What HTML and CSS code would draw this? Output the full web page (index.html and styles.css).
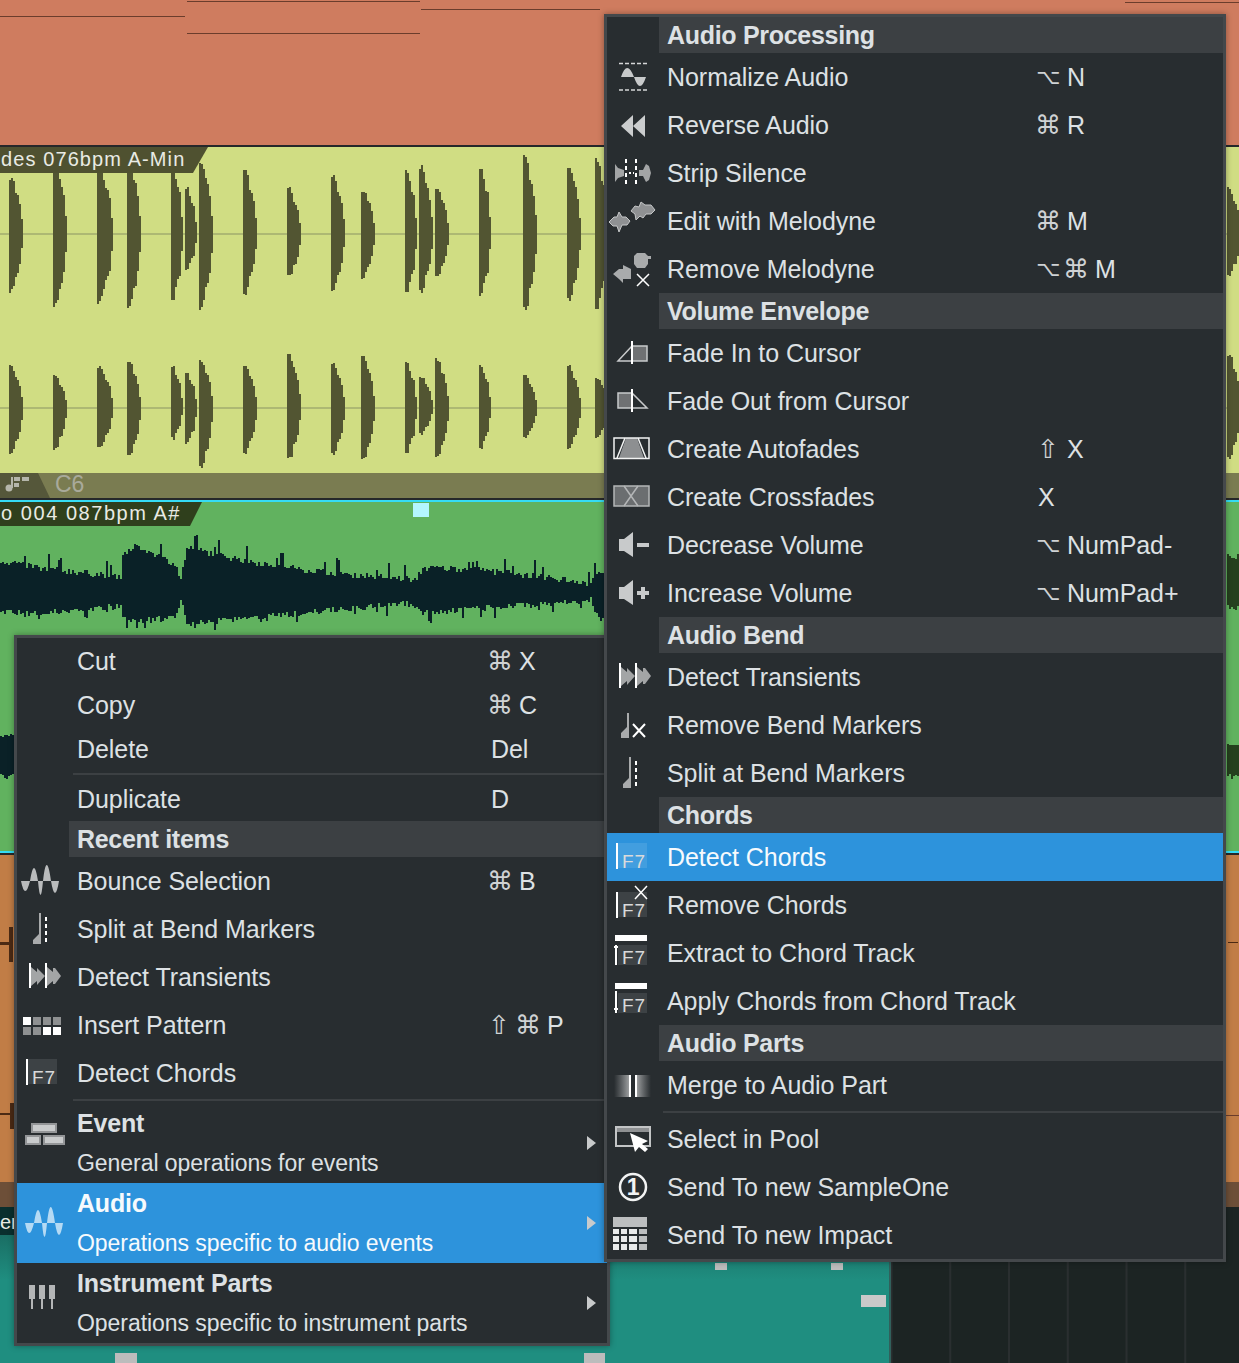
FILE: index.html
```html
<!DOCTYPE html>
<html lang="en">
<head>
    <meta charset="UTF-8">
    <title>Audio context menu</title>
    <link rel="stylesheet" href="styles.css">
</head>
<body>

<!-- shared icons -->
<svg class="defs" aria-hidden="true">
    <symbol id="i-wave" viewBox="0 0 38 48" width="38" height="48">
        <path d="M0 24Q4 44 9 24Q13 -2 17 24Q19.5 52 22 24Q25.5 -8 30 24Q34 48 38 24Z"/>
    </symbol>
    <symbol id="i-transients" viewBox="0 0 60 48" width="60" height="48">
        <path fill="#a3a5a6" d="M14 14L20 19V15L28 23L20 32V28L14 33ZM30 14L36 19V15L38 15L44 23L38 31H36V28L30 33Z"/>
        <path fill="#fff" d="M12 10h2v25h-2zM28 10h2v25h-2z"/>
    </symbol>
    <symbol id="i-split" viewBox="0 0 60 48" width="60" height="48">
        <path fill="#a9abac" d="M22 8h2v31h-8v-4l6-6z"/>
        <path stroke="#fff" stroke-width="2" stroke-dasharray="4 3" d="M29 12V38"/>
    </symbol>
    <symbol id="i-f7" viewBox="0 0 60 48" width="60" height="48">
        <path fill="#fff" fill-opacity=".1" d="M11 10h29v25H11z"/>
        <path fill="#fff" d="M9 10h2v26H9z"/>
    </symbol>
    <symbol id="i-f7-track" viewBox="0 0 60 48" width="60" height="48">
        <path fill="#fff" d="M8 6h32v6H8z"/>
        <path fill="#fff" fill-opacity=".1" d="M11 16h29v20H11z"/>
    </symbol>
</svg>

<div class="stage">

    <div class="tracks">
        <div class="track track-top">
            <svg width="1239" height="145"><path class="clip-lines" d="M0 16.5H185M187 1.5H420M187 33.5H420M421 9.5H600M1125 2.5H1239"/></svg>
        </div>

        <div class="track track-yellow">
            <svg width="1239" height="326">
                <path class="mid-yellow" d="M0 87H1239M0 261H1239"/>
                <path id="wave-yellow" class="wave-yellow"/>
            </svg>
            <div class="clip-name clip-name-yellow">des 076bpm A-Min</div>
        </div>

        <div class="track track-chord">
            <div class="chord-tag">
                <svg width="26" height="16"><circle cx="5" cy="12" r="3.5"/><path d="M7 1h2v11H7zM10 1h6v4h-6zM18 1h7v4h-7zM10 7h5v4h-5z"/></svg>
            </div>
            <span class="chord-name">C6</span>
        </div>

        <div class="track track-green">
            <svg width="1239" height="349"><path id="wave-green" class="wave-green"/><path id="wave-green-side" class="wave-green-side"/></svg>
            <div class="clip-name clip-name-green">o 004 087bpm A#</div>
            <div class="clip-handle"></div>
        </div>

        <div class="track track-orange">
            <svg width="1239" height="327"><path class="marks" d="M9 72h4v35H9zM0 87h9v3H0zM10 248h4v26h-4zM0 258h10v2H0zM1228 87h10v1h-10z"/><path class="clip-lines" d="M1226 260.5H1239"/></svg>
        </div>
        <div class="track track-brown"></div>

        <div class="track-bottom">
            <div class="teal-col">
                <div class="teal-name">er</div>
                <div class="teal-clip">
                    <span class="tick tick-a"></span>
                    <span class="tick tick-b"></span>
                    <span class="tick tick-c"></span>
                    <span class="tick tick-d"></span>
                    <span class="tick tick-e"></span>
                </div>
            </div>
            <div class="dark-grid"></div>
        </div>
    </div>

    <!-- context menu -->
    <div class="menu menu-left">
        <div class="row row-low"><span class="icon"></span><span class="label">Cut</span><span class="keys"><span class="sym cmd">⌘</span>X</span></div>
        <div class="row row-low"><span class="icon"></span><span class="label">Copy</span><span class="keys"><span class="sym cmd">⌘</span>C</span></div>
        <div class="row row-low"><span class="icon"></span><span class="label">Delete</span><span class="keys keys-plain">Del</span></div>
        <div class="sep"></div>
        <div class="row row-low"><span class="icon"></span><span class="label">Duplicate</span><span class="keys keys-plain">D</span></div>
        <div class="head">Recent items</div>
        <div class="row">
            <svg class="icon" viewBox="0 0 60 48"><use href="#i-wave" x="4" fill="#b9bbbc"/></svg>
            <span class="label">Bounce Selection</span><span class="keys"><span class="sym cmd">⌘</span>B</span>
        </div>
        <div class="row">
            <svg class="icon" viewBox="0 0 60 48"><use href="#i-split"/></svg>
            <span class="label">Split at Bend Markers</span>
        </div>
        <div class="row">
            <svg class="icon" viewBox="0 0 60 48"><use href="#i-transients"/></svg>
            <span class="label">Detect Transients</span>
        </div>
        <div class="row">
            <svg class="icon" viewBox="0 0 60 48">
                <path fill="#fff" d="M6 16h8v8H6zM36 26h8v8h-8zM26 26h8v8h-8z"/>
                <path fill="#8e9091" d="M16 16h8v8h-8zM26 16h8v8h-8zM36 16h8v8h-8zM6 26h8v8H6zM16 26h8v8h-8z"/>
            </svg>
            <span class="label">Insert Pattern</span><span class="keys"><span class="sym shift sym-tight">⇧</span><span class="sym cmd">⌘</span>P</span>
        </div>
        <div class="row">
            <svg class="icon" viewBox="0 0 60 48"><use href="#i-f7"/><text class="f7" x="15" y="35">F7</text></svg>
            <span class="label">Detect Chords</span>
        </div>
        <div class="sep"></div>
        <div class="row row-tall">
            <svg class="icon" viewBox="0 0 60 48">
                <path fill="#c9cbcc" stroke="#939597" stroke-width="2" d="M15 5h24v8H15zM9 17h14v8H9zM27 17h20v8H27z"/>
            </svg>
            <span class="label label-two"><b>Event</b><span>General operations for events</span></span>
            <span class="arrow"></span>
        </div>
        <div class="row row-tall active">
            <svg class="icon" viewBox="0 0 60 48"><use href="#i-wave" x="8" fill="#b5daf4"/></svg>
            <span class="label label-two"><b>Audio</b><span>Operations specific to audio events</span></span>
            <span class="arrow"></span>
        </div>
        <div class="row row-tall">
            <svg class="icon" viewBox="0 0 60 48">
                <path fill="#b4b6b7" d="M12 6h6v14h-2v10h-2V20h-2zM22 6h6v14h-2v10h-2V20h-2zM32 6h6v14h-2v10h-2V20h-2z"/>
            </svg>
            <span class="label label-two"><b>Instrument Parts</b><span>Operations specific to instrument parts</span></span>
            <span class="arrow"></span>
        </div>
    </div>

    <!-- submenu -->
    <div class="menu menu-right">
        <div class="head">Audio Processing</div>
        <div class="row">
            <svg class="icon" viewBox="0 0 60 48">
                <path stroke="#d5d7d8" stroke-width="1.5" stroke-dasharray="4 2" d="M12 10.5H40M12 37H40"/>
                <path fill="#c8cacb" d="M14 24Q20 6 27 24ZM27 24H39Q33 42 27 24Z"/>
            </svg>
            <span class="label">Normalize Audio</span><span class="keys"><span class="sym opt">⌥</span>N</span>
        </div>
        <div class="row">
            <svg class="icon" viewBox="0 0 60 48"><path fill="#cbcdce" d="M14 25L26 14V36ZM26 25L38 14V36Z"/></svg>
            <span class="label">Reverse Audio</span><span class="keys"><span class="sym cmd">⌘</span>R</span>
        </div>
        <div class="row">
            <svg class="icon" viewBox="0 0 60 48">
                <path fill="#a3a5a6" d="M8 15L11 19L17 21V27L11 29L8 33ZM32 21H36L39 15L42 17L44 24L42 31L39 33L36 27H32Z"/>
                <path stroke="#fff" stroke-width="2" stroke-dasharray="4 3" d="M19 10V38M29 10V38"/>
                <path stroke="#fff" stroke-width="2" d="M22 24h2M26 24h1"/>
            </svg>
            <span class="label">Strip Silence</span>
        </div>
        <div class="row">
            <svg class="icon" viewBox="0 0 60 48">
                <path fill="#8f9193" stroke="#c5c7c8" d="M2 25L7 20L10 20L12 15L15 20L19 20L23 24L20 28L15 28L12 35L10 29L6 29Z"/>
                <path fill="#8f9193" stroke="#c5c7c8" d="M24 14L28 9L32 10L34 5L38 8L44 8L48 13L44 17L39 17L36 21L33 19L29 23L28 17Z"/>
            </svg>
            <span class="label">Edit with Melodyne</span><span class="keys"><span class="sym cmd">⌘</span>M</span>
        </div>
        <div class="row">
            <svg class="icon" viewBox="0 0 60 48">
                <path fill="#a9abac" d="M27 11L30 8H38L41 11H44V14H41V19L38 23H30L27 19ZM6 29L12 24H16V20L24 24V34L16 34V38L12 34Z"/>
                <path stroke="#fff" stroke-width="1.5" fill="none" d="M30 29L42 41M42 29L30 41"/>
            </svg>
            <span class="label">Remove Melodyne</span><span class="keys"><span class="sym opt sym-tight">⌥</span><span class="sym cmd">⌘</span>M</span>
        </div>
        <div class="head">Volume Envelope</div>
        <div class="row">
            <svg class="icon" viewBox="0 0 60 48">
                <path fill="#6f7173" stroke="#c8cacb" stroke-width="1.5" d="M25 17H40V32H25Z"/>
                <path fill="none" stroke="#c8cacb" stroke-width="1.5" d="M25 17L11 32H25"/>
                <path stroke="#fff" stroke-width="2" d="M25 12V35"/>
            </svg>
            <span class="label">Fade In to Cursor</span>
        </div>
        <div class="row">
            <svg class="icon" viewBox="0 0 60 48">
                <path fill="#6f7173" stroke="#c8cacb" stroke-width="1.5" d="M11 16H25V31H11Z"/>
                <path fill="none" stroke="#c8cacb" stroke-width="1.5" d="M25 16L40 31H25"/>
                <path stroke="#fff" stroke-width="2" d="M25 12V35"/>
            </svg>
            <span class="label">Fade Out from Cursor</span>
        </div>
        <div class="row">
            <svg class="icon" viewBox="0 0 60 48">
                <path fill="#8d8f91" d="M12 33L19 13H30L37 33Z"/>
                <path fill="none" stroke="#f2f3f3" stroke-width="1.5" d="M7 13H42V33.5H7ZM10 33L18 13M31 13L39 33"/>
            </svg>
            <span class="label">Create Autofades</span><span class="keys"><span class="sym shift shift-solo">⇧</span>X</span>
        </div>
        <div class="row">
            <svg class="icon" viewBox="0 0 60 48">
                <path fill="#6b6e70" stroke="#b4b6b7" stroke-width="1.5" d="M7 13H42V33H7Z"/>
                <path fill="none" stroke="#b4b6b7" stroke-width="1.5" d="M17 13L31 33M31 13L17 33"/>
            </svg>
            <span class="label">Create Crossfades</span><span class="keys"><span class="key-x">X</span></span>
        </div>
        <div class="row">
            <svg class="icon" viewBox="0 0 60 48">
                <path fill="#c8cacb" d="M12 18H17L26 11V36L17 30H12ZM30 22H42V26H30Z"/>
            </svg>
            <span class="label">Decrease Volume</span><span class="keys"><span class="sym opt">⌥</span>NumPad-</span>
        </div>
        <div class="row">
            <svg class="icon" viewBox="0 0 60 48">
                <path fill="#c8cacb" d="M12 18H17L26 11V36L17 30H12ZM30 22H34V18H38V22H42V26H38V30H34V26H30Z"/>
            </svg>
            <span class="label">Increase Volume</span><span class="keys"><span class="sym opt">⌥</span>NumPad+</span>
        </div>
        <div class="head">Audio Bend</div>
        <div class="row">
            <svg class="icon" viewBox="0 0 60 48"><use href="#i-transients"/></svg>
            <span class="label">Detect Transients</span>
        </div>
        <div class="row">
            <svg class="icon" viewBox="0 0 60 48">
                <path fill="#a9abac" d="M20 12h2v25h-8v-5l6-6z"/>
                <path stroke="#fff" stroke-width="2" fill="none" d="M26 23L38 36M38 23L26 36"/>
            </svg>
            <span class="label">Remove Bend Markers</span>
        </div>
        <div class="row">
            <svg class="icon" viewBox="0 0 60 48"><use href="#i-split"/></svg>
            <span class="label">Split at Bend Markers</span>
        </div>
        <div class="head">Chords</div>
        <div class="row active">
            <svg class="icon" viewBox="0 0 60 48"><use href="#i-f7"/><text class="f7" x="15" y="35">F7</text></svg>
            <span class="label">Detect Chords</span>
        </div>
        <div class="row">
            <svg class="icon" viewBox="0 0 60 48">
                <use href="#i-f7" y="1"/>
                <text class="f7" x="15" y="36">F7</text>
                <path stroke="#fff" stroke-width="1.5" fill="none" d="M28 5L40 18M40 5L28 18" />
            </svg>
            <span class="label">Remove Chords</span>
        </div>
        <div class="row">
            <svg class="icon" viewBox="0 0 60 48">
                <use href="#i-f7-track"/>
                <text class="f7" x="15" y="35">F7</text>
                <path stroke="#fff" stroke-width="2" d="M9 16V36M7 18H11"/>
            </svg>
            <span class="label">Extract to Chord Track</span>
        </div>
        <div class="row">
            <svg class="icon" viewBox="0 0 60 48">
                <use href="#i-f7-track"/>
                <text class="f7" x="15" y="35">F7</text>
                <path stroke="#fff" stroke-width="2" d="M9 14V36M7 32H11"/>
            </svg>
            <span class="label">Apply Chords from Chord Track</span>
        </div>
        <div class="head">Audio Parts</div>
        <div class="row">
            <svg class="icon" viewBox="0 0 60 48">
                <defs>
                    <linearGradient id="fade-l"><stop offset="0" stop-color="#8f9193" stop-opacity="0"/><stop offset="1" stop-color="#a5a7a8"/></linearGradient>
                    <linearGradient id="fade-r"><stop offset="0" stop-color="#a5a7a8"/><stop offset="1" stop-color="#8f9193" stop-opacity="0"/></linearGradient>
                </defs>
                <path fill="url(#fade-l)" d="M7 14H23V36H7Z"/>
                <path fill="url(#fade-r)" d="M29 14H44V36H29Z"/>
                <path fill="#fff" d="M22 14h2v22h-2zM28 14h2v22h-2z"/>
            </svg>
            <span class="label">Merge to Audio Part</span>
        </div>
        <div class="sep"></div>
        <div class="row">
            <svg class="icon" viewBox="0 0 60 48">
                <path fill="#8f9193" d="M8 11H44V17H8Z"/>
                <path fill="none" stroke="#c3c5c6" stroke-width="2" d="M9 12H43V31H9Z"/>
                <path fill="#fff" d="M23 18L41 26L35 29L41 34L38 37L32 32L28 37Z"/>
            </svg>
            <span class="label">Select in Pool</span>
        </div>
        <div class="row">
            <svg class="icon" viewBox="0 0 60 48">
                <circle cx="26" cy="24" r="13" fill="none" stroke="#f2f3f3" stroke-width="2.5"/>
                <text class="one" x="26" y="32">1</text>
            </svg>
            <span class="label">Send To new SampleOne</span>
        </div>
        <div class="row">
            <svg class="icon" viewBox="0 0 60 48">
                <path fill="#bcbebf" d="M6 6H40V16H6ZM32 18H40V23H32ZM32 25H40V31H32ZM32 33H40V39H32Z"/>
                <path fill="#e9eaea" d="M6 18H12V23H6ZM14 18H20V23H14ZM22 18H30V23H22ZM6 25H12V31H6ZM14 25H20V31H14ZM22 25H30V31H22ZM6 33H12V39H6ZM14 33H20V39H14ZM22 33H30V39H22Z"/>
            </svg>
            <span class="label">Send To new Impact</span>
        </div>
    </div>

</div>

<script src="waves.js"></script>
</body>
</html>
```

FILE: styles.css
```css
/* Page */
body {
    margin: 0;
    background: #1c2423;
    font-family: "Liberation Sans", Arial, sans-serif;
}

.defs {
    position: absolute;
    width: 0;
    height: 0;
}

.stage {
    position: relative;
    width: 1239px;
    height: 1363px;
    overflow: hidden;
}

/* Arrange view behind the menus */
.tracks {
    display: flex;
    flex-direction: column;
    height: 100%;
}

.track {
    position: relative;
    flex: none;
}

.track svg {
    display: block;
}

.track-top {
    height: 145px;
    background: #cf7c5f;
    border-bottom: 2px solid #26282a;
}

.clip-lines {
    stroke: #6b3d2c;
    stroke-width: 1;
    fill: none;
}

.track-yellow {
    height: 326px;
    background: #d0dd83;
}

.mid-yellow {
    stroke: #adb873;
    stroke-width: 2;
}

.wave-yellow {
    fill: #525532;
}

.clip-name {
    position: absolute;
    top: 0;
    left: 0;
    height: 26px;
    line-height: 25px;
    font-size: 20px;
    color: #e9ebe4;
    white-space: nowrap;
}

.clip-name-yellow {
    width: 207px;
    padding-left: 1px;
    letter-spacing: 1.1px;
    background: #4f5130;
    clip-path: polygon(0 0, 100% 0, 193px 100%, 0 100%);
}

.track-chord {
    height: 25px;
    background: #7a7c51;
    border-bottom: 2px solid #26282a;
    display: flex;
    align-items: center;
    box-sizing: content-box;
}

.chord-tag {
    width: 50px;
    height: 25px;
    background: #55573a;
    clip-path: polygon(0 0, 38px 0, 100% 100%, 0 100%);
}

.chord-tag svg {
    margin: 3px 0 0 4px;
    fill: #b5b6ab;
}

.chord-name {
    margin: -2px 0 0 5px;
    font-size: 23px;
    color: #a9aa9b;
}

.track-green {
    height: 349px;
    background: #61b25f;
    border-top: 2px solid #35dcf5;
    border-bottom: 2px solid #35dcf5;
}

.wave-green {
    fill: #0a2127;
}

.wave-green-side {
    fill: #25401e;
}

.clip-name-green {
    width: 201px;
    height: 24px;
    line-height: 22px;
    padding-left: 1px;
    letter-spacing: 1.55px;
    background: #2f3f1c;
    clip-path: polygon(0 0, 100% 0, 190px 100%, 0 100%);
}

.clip-handle {
    position: absolute;
    top: 1px;
    left: 413px;
    width: 16px;
    height: 14px;
    background: #b3f6ff;
}

.track-orange {
    height: 327px;
    background: #c17d46;
    border-top: 2px solid #26282a;
}

.marks {
    fill: #4b2a14;
}

.track-brown {
    height: 25px;
    background: #6d4f38;
}

.track-bottom {
    display: flex;
    flex: 1;
}

.teal-col {
    width: 889px;
    display: flex;
    flex-direction: column;
    border-right: 2px solid #31605b;
}

.teal-name {
    height: 28px;
    line-height: 30px;
    background: #0a2f2e;
    font-size: 20px;
    color: #e9ebe4;
}

.teal-clip {
    position: relative;
    flex: 1;
    background: linear-gradient(#1a6e64, #1f8e80 45px);
}

.tick {
    position: absolute;
    background: #bcbcbc;
}

.tick-a { left: 115px; top: 118px; width: 22px; height: 10px; }
.tick-b { left: 584px; top: 118px; width: 21px; height: 10px; }
.tick-c { left: 715px; top: 28px; width: 12px; height: 7px; }
.tick-d { left: 831px; top: 28px; width: 12px; height: 7px; }
.tick-e { left: 861px; top: 60px; width: 25px; height: 12px; background: #c9c9c9; }

.dark-grid {
    flex: 1;
    background: linear-gradient(90deg, #1c2423 0, #1c2423 56.75px, #2a2f30 56.75px) 1.5px 0 / 58.75px 100%;
}

/* Menus */
.menu {
    position: absolute;
    box-sizing: border-box;
    background: #282d30;
    border: 3px solid #44484b;
    color: #dde1e4;
    font-size: 25px;
    letter-spacing: -0.05px;
    box-shadow: 0 0 6px rgba(0, 0, 0, 0.35);
}

.menu-left {
    left: 14px;
    top: 635px;
    width: 596px;
    height: 711px;
    padding-top: 1px;
}

.menu-right {
    left: 604px;
    top: 14px;
    width: 622px;
    height: 1248px;
}

.head {
    box-sizing: border-box;
    height: 36px;
    line-height: 37px;
    margin-left: 52px;
    padding-left: 8px;
    background: #3c4043;
    font-weight: bold;
    letter-spacing: -0.3px;
    white-space: nowrap;
}

.sep {
    height: 6px;
    padding-top: 2px;
    box-sizing: border-box;
    margin-left: 56px;
}

.sep::before {
    content: "";
    display: block;
    height: 2px;
    background: #3c4043;
}

.row {
    display: flex;
    align-items: center;
    height: 48px;
    white-space: nowrap;
}

.row-low {
    height: 44px;
}

.row-tall {
    height: 80px;
}

.active {
    background: #2d93dc;
    color: #f6fafd;
}

.icon {
    flex: none;
    width: 60px;
    height: 48px;
    overflow: visible;
}

.label {
    flex: none;
}

.menu-left .label {
    width: 411px;
}

.menu-right .label {
    width: 369px;
}

.menu-left .label-two {
    width: 510px;
    display: flex;
    flex-direction: column;
}

.label-two b,
.label-two span {
    height: 40px;
    line-height: 40px;
}

.label-two b {
    letter-spacing: -0.2px;
}

.label-two span {
    font-size: 23px;
    letter-spacing: -0.05px;
}

.keys {
    display: flex;
    align-items: center;
}

.keys-plain {
    padding-left: 3px;
}

.key-x {
    padding-left: 2px;
}

.sym {
    width: 31px;
    font-family: "DejaVu Sans", sans-serif;
    line-height: 1;
    color: #cfd2d4;
}

.cmd {
    font-size: 26px;
    margin-left: -1px;
    margin-right: 1px;
}

.opt {
    font-size: 21px;
}

.shift {
    font-size: 26px;
}

.shift-solo {
    box-sizing: border-box;
    padding-left: 1px;
}

.sym-tight {
    width: 28px;
}

.arrow {
    width: 0;
    height: 0;
    border-left: 9px solid #c8cacb;
    border-top: 7px solid transparent;
    border-bottom: 7px solid transparent;
}

.f7 {
    font-family: "Liberation Sans", Arial, sans-serif;
    font-size: 19px;
    letter-spacing: 1px;
    fill: #d9dadb;
}

.one {
    font-family: "Liberation Sans", Arial, sans-serif;
    font-size: 23px;
    font-weight: bold;
    fill: #f2f3f3;
    text-anchor: middle;
}
```

FILE: waves.js
```js
// fake but stable noise, so the picture is the same every time
let seed = 7;
function rnd() {
    seed = (seed * 16807) % 2147483647;
    return seed / 2147483647;
}

// x, width, amp up, amp down
const yellowTop = [
    [9, 14, 59, 59], [53, 14, 75, 75], [97, 16, 71, 71], [127, 14, 77, 77],
    [171, 12, 69, 69], [185, 12, 47, 37], [199, 14, 76, 77], [243, 14, 65, 61],
    [287, 14, 47, 44], [331, 14, 61, 57], [361, 14, 45, 45], [405, 12, 65, 61],
    [419, 14, 69, 59], [435, 14, 47, 45], [479, 12, 69, 63], [523, 14, 79, 79],
    [567, 14, 71, 69], [595, 14, 77, 75], [1227, 14, 47, 44]
];
const yellowBottom = [
    [9, 14, 43, 47], [53, 14, 33, 42], [97, 16, 43, 42], [127, 14, 48, 50],
    [171, 12, 43, 32], [185, 12, 36, 37], [199, 14, 50, 62], [243, 14, 43, 47],
    [287, 14, 55, 53], [331, 14, 47, 49], [361, 14, 53, 53], [405, 12, 47, 47],
    [419, 14, 33, 27], [435, 14, 51, 51], [479, 12, 43, 41], [523, 14, 33, 31],
    [567, 14, 43, 41], [595, 14, 31, 31], [1227, 14, 56, 53]
];

// how far a hit reaches across its width
const shape = [1, 1, 0.92, 0.82, 0.74, 0.68, 0.62, 0.52, 0.25, 0.05];

function bursts(list, center) {
    let d = "";
    list.forEach(([x, w, up, down]) => {
        for (let px = 0; px < w; px += 2) {
            const s = shape[Math.floor((px / w) * shape.length)];
            const a = Math.round(up * s * (0.92 + rnd() * 0.08));
            const b = Math.round(down * s * (0.92 + rnd() * 0.08));
            d += `M${x + px} ${center - a}h2v${a + b}h-2z`;
        }
    });
    return d;
}

document.getElementById("wave-yellow").setAttribute("d",
    bursts(yellowTop, 87) + bursts(yellowBottom, 261));

// x, top y, bottom y (page coords minus the track top, 502)
const greenEnv = [
    [0, 56, 111], [40, 63, 113], [120, 72, 106], [122, 50, 115], [135, 40, 121],
    [175, 60, 118], [180, 76, 98], [186, 43, 123], [250, 57, 118], [320, 67, 111],
    [415, 75, 103], [422, 63, 113], [480, 65, 108], [590, 78, 100], [595, 67, 115],
    [604, 67, 115]
];

function envAt(x) {
    for (let i = 1; i < greenEnv.length; i++) {
        const [x1, t1, b1] = greenEnv[i];
        if (x <= x1) {
            const [x0, t0, b0] = greenEnv[i - 1];
            const k = (x - x0) / (x1 - x0 || 1);
            return [t0 + (t1 - t0) * k, b0 + (b1 - b0) * k];
        }
    }
    return [80, 100];
}

function noise(big) {
    const r = rnd();
    if (r > 0.9) return big * (0.6 + rnd() * 0.6);
    return r * 7;
}

let green = "";
for (let x = 0; x < 604; x += 2) {
    const [top, bottom] = envAt(x);
    const t = Math.round(top + 6 - noise(16));
    const b = Math.round(bottom - 5 + noise(12));
    green += `M${x} ${t}h2V${b}h-2z`;
}
// second channel, only its left end shows past the menu
for (let x = 0; x < 14; x += 2) {
    const t = Math.round(230 + rnd() * 6);
    const b = Math.round(278 - rnd() * 6);
    green += `M${x} ${t}h2V${b}h-2z`;
}
document.getElementById("wave-green").setAttribute("d", green);

let side = "";
for (let x = 1227; x < 1239; x += 2) {
    side += `M${x} ${Math.round(52 + rnd() * 6)}h2V${Math.round(110 - rnd() * 8)}h-2z`;
    side += `M${x} ${Math.round(238 + rnd() * 6)}h2V${Math.round(278 - rnd() * 6)}h-2z`;
}
document.getElementById("wave-green-side").setAttribute("d", side);
```
